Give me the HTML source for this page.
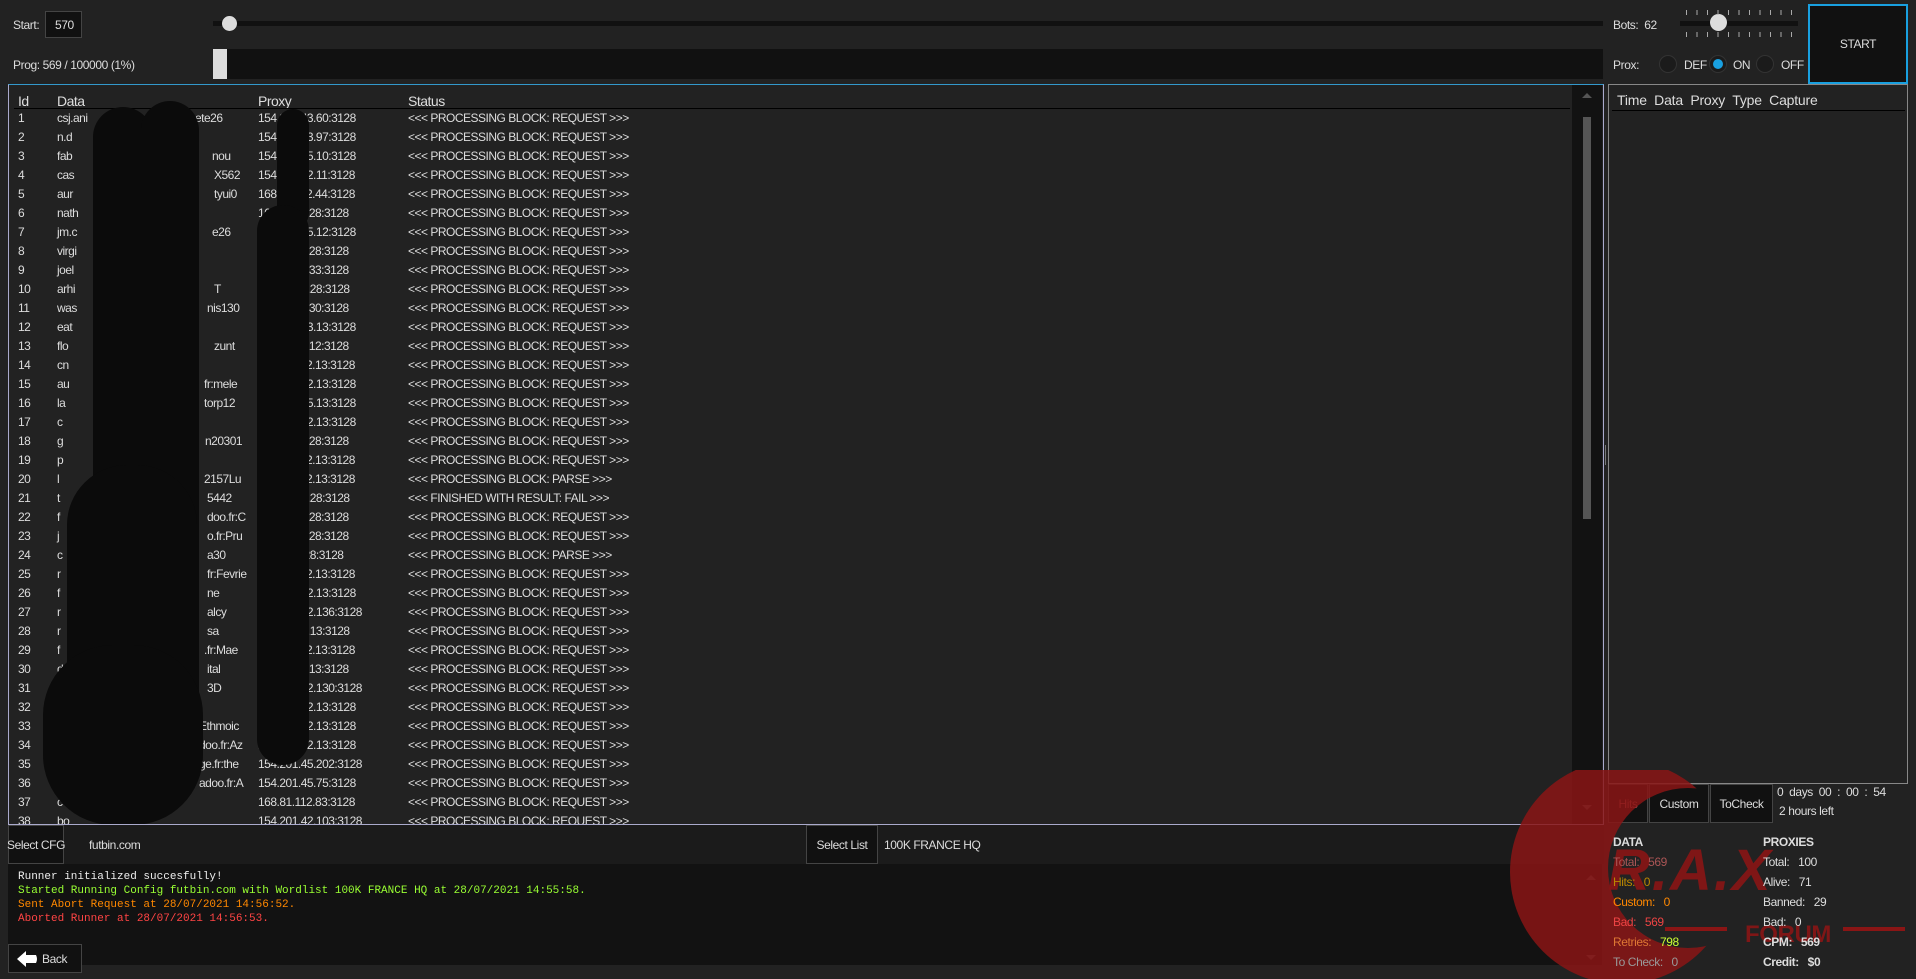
<!DOCTYPE html>
<html><head><meta charset="utf-8"><style>
*{box-sizing:border-box;margin:0;padding:0}
body{width:1916px;height:979px;background:#222;overflow:hidden;position:relative;font-family:"Liberation Sans",sans-serif;color:#ddd;font-size:12px;letter-spacing:-0.4px}
.a{position:absolute;white-space:nowrap}
.lbl{font-size:12px;color:#ddd}
.tbl{left:8px;top:84px;width:1596px;height:741px;border:1px solid #aac;border-top-color:#39c;background:#222;overflow:hidden}
.row{position:absolute;left:0;height:19px;width:1560px;font-size:12px;color:#ddd;white-space:nowrap;letter-spacing:-0.5px}
.row span{position:absolute;top:2px}
.c1{left:9px}.c2{left:48px}.c3{left:249px}.c4{left:399px}
.btn{background:#111;border:1px solid #444;color:#ddd;display:flex;align-items:center;justify-content:center;font-size:12px;white-space:nowrap}
.mono{font-family:"Liberation Mono",monospace;font-size:11px;letter-spacing:0}
.blob{position:absolute;background:#0b0b0b}
</style></head><body>
<div class="a lbl" style="left:13px;top:18px">Start:</div>
<div class="a" style="left:45px;top:11px;width:37px;height:27px;background:#111;border:1px solid #444;font-size:12px;padding:6px 0 0 9px">570</div>
<div class="a" style="left:213px;top:21px;width:1390px;height:5px;background:#111"></div>
<div class="a" style="left:222px;top:16px;width:15px;height:15px;border-radius:50%;background:#ddd"></div>
<div class="a lbl" style="left:13px;top:58px">Prog: 569 / 100000 (1%)</div>
<div class="a" style="left:213px;top:49px;width:1390px;height:30px;background:#111"></div>
<div class="a" style="left:213px;top:49px;width:14px;height:30px;background:#ddd"></div>
<div class="a lbl" style="left:1613px;top:18px">Bots:&nbsp;&nbsp;62</div>
<div class="a" style="left:1680px;top:21px;width:118px;height:5px;background:#111"></div>
<div class="a" style="left:1710px;top:14px;width:17px;height:17px;border-radius:50%;background:#ddd"></div>
<div class="a" style="left:1686px;top:10px;width:112px;height:5px;background:repeating-linear-gradient(90deg,#aaa 0 1px,transparent 1px 10.5px)"></div>
<div class="a" style="left:1686px;top:32px;width:112px;height:5px;background:repeating-linear-gradient(90deg,#aaa 0 1px,transparent 1px 10.5px)"></div>
<div class="a lbl" style="left:1613px;top:58px">Prox:</div>
<div class="a" style="left:1659px;top:55px;width:18px;height:18px;border-radius:50%;border:1px solid #333;background:#1b1b1b"></div>
<div class="a lbl" style="left:1684px;top:58px">DEF</div>
<div class="a" style="left:1709px;top:55px;width:18px;height:18px;border-radius:50%;border:1px solid #333;background:#1b1b1b"><div style="margin:3px;width:10px;height:10px;border-radius:50%;background:#19a0e0"></div></div>
<div class="a lbl" style="left:1733px;top:58px">ON</div>
<div class="a" style="left:1756px;top:55px;width:18px;height:18px;border-radius:50%;border:1px solid #333;background:#1b1b1b"></div>
<div class="a lbl" style="left:1781px;top:58px">OFF</div>
<div class="a" style="left:1808px;top:4px;width:100px;height:80px;background:#111;border:2px solid #19a0e0;display:flex;align-items:center;justify-content:center;font-size:12px">START</div>

<div class="a tbl">
<div class="row" style="top:6px;font-size:14px"><span class="c1">Id</span><span class="c2">Data</span><span class="c3">Proxy</span><span class="c4">Status</span></div>
<div class="a" style="left:5px;top:23px;width:1556px;height:1px;background:#000"></div>
<div class="row" style="top:24px"><span class="c1">1</span><span class="c2">csj.ani</span><span style="left:186px">ete26</span><span class="c3">154.201.43.60:3128</span><span class="c4">&lt;&lt;&lt; PROCESSING BLOCK: REQUEST &gt;&gt;&gt;</span></div>
<div class="row" style="top:43px"><span class="c1">2</span><span class="c2">n.d</span><span class="c3">154.201.43.97:3128</span><span class="c4">&lt;&lt;&lt; PROCESSING BLOCK: REQUEST &gt;&gt;&gt;</span></div>
<div class="row" style="top:62px"><span class="c1">3</span><span class="c2">fab</span><span style="left:203px">nou</span><span class="c3">154.201.45.10:3128</span><span class="c4">&lt;&lt;&lt; PROCESSING BLOCK: REQUEST &gt;&gt;&gt;</span></div>
<div class="row" style="top:81px"><span class="c1">4</span><span class="c2">cas</span><span style="left:205px">X562</span><span class="c3">154.201.42.11:3128</span><span class="c4">&lt;&lt;&lt; PROCESSING BLOCK: REQUEST &gt;&gt;&gt;</span></div>
<div class="row" style="top:100px"><span class="c1">5</span><span class="c2">aur</span><span style="left:205px">tyui0</span><span class="c3">168.81.112.44:3128</span><span class="c4">&lt;&lt;&lt; PROCESSING BLOCK: REQUEST &gt;&gt;&gt;</span></div>
<div class="row" style="top:119px"><span class="c1">6</span><span class="c2">nath</span><span class="c3">168.81.11.28:3128</span><span class="c4">&lt;&lt;&lt; PROCESSING BLOCK: REQUEST &gt;&gt;&gt;</span></div>
<div class="row" style="top:138px"><span class="c1">7</span><span class="c2">jm.c</span><span style="left:203px">e26</span><span class="c3">154.201.45.12:3128</span><span class="c4">&lt;&lt;&lt; PROCESSING BLOCK: REQUEST &gt;&gt;&gt;</span></div>
<div class="row" style="top:157px"><span class="c1">8</span><span class="c2">virgi</span><span class="c3">168.81.11.28:3128</span><span class="c4">&lt;&lt;&lt; PROCESSING BLOCK: REQUEST &gt;&gt;&gt;</span></div>
<div class="row" style="top:176px"><span class="c1">9</span><span class="c2">joel</span><span class="c3">196.11.22.33:3128</span><span class="c4">&lt;&lt;&lt; PROCESSING BLOCK: REQUEST &gt;&gt;&gt;</span></div>
<div class="row" style="top:195px"><span class="c1">10</span><span class="c2">arhi</span><span style="left:205px">T</span><span class="c3">154.201.4.28:3128</span><span class="c4">&lt;&lt;&lt; PROCESSING BLOCK: REQUEST &gt;&gt;&gt;</span></div>
<div class="row" style="top:214px"><span class="c1">11</span><span class="c2">was</span><span style="left:198px">nis130</span><span class="c3">168.81.11.30:3128</span><span class="c4">&lt;&lt;&lt; PROCESSING BLOCK: REQUEST &gt;&gt;&gt;</span></div>
<div class="row" style="top:233px"><span class="c1">12</span><span class="c2">eat</span><span class="c3">154.201.43.13:3128</span><span class="c4">&lt;&lt;&lt; PROCESSING BLOCK: REQUEST &gt;&gt;&gt;</span></div>
<div class="row" style="top:252px"><span class="c1">13</span><span class="c2">flo</span><span style="left:205px">zunt</span><span class="c3">196.11.22.12:3128</span><span class="c4">&lt;&lt;&lt; PROCESSING BLOCK: REQUEST &gt;&gt;&gt;</span></div>
<div class="row" style="top:271px"><span class="c1">14</span><span class="c2">cn</span><span class="c3">168.81.112.13:3128</span><span class="c4">&lt;&lt;&lt; PROCESSING BLOCK: REQUEST &gt;&gt;&gt;</span></div>
<div class="row" style="top:290px"><span class="c1">15</span><span class="c2">au</span><span style="left:195px">fr:mele</span><span class="c3">154.201.42.13:3128</span><span class="c4">&lt;&lt;&lt; PROCESSING BLOCK: REQUEST &gt;&gt;&gt;</span></div>
<div class="row" style="top:309px"><span class="c1">16</span><span class="c2">la</span><span style="left:195px">torp12</span><span class="c3">154.201.45.13:3128</span><span class="c4">&lt;&lt;&lt; PROCESSING BLOCK: REQUEST &gt;&gt;&gt;</span></div>
<div class="row" style="top:328px"><span class="c1">17</span><span class="c2">c</span><span class="c3">154.201.42.13:3128</span><span class="c4">&lt;&lt;&lt; PROCESSING BLOCK: REQUEST &gt;&gt;&gt;</span></div>
<div class="row" style="top:347px"><span class="c1">18</span><span class="c2">g</span><span style="left:196px">n20301</span><span class="c3">168.81.11.28:3128</span><span class="c4">&lt;&lt;&lt; PROCESSING BLOCK: REQUEST &gt;&gt;&gt;</span></div>
<div class="row" style="top:366px"><span class="c1">19</span><span class="c2">p</span><span class="c3">168.81.112.13:3128</span><span class="c4">&lt;&lt;&lt; PROCESSING BLOCK: REQUEST &gt;&gt;&gt;</span></div>
<div class="row" style="top:385px"><span class="c1">20</span><span class="c2">l</span><span style="left:195px">2157Lu</span><span class="c3">168.81.112.13:3128</span><span class="c4">&lt;&lt;&lt; PROCESSING BLOCK: PARSE &gt;&gt;&gt;</span></div>
<div class="row" style="top:404px"><span class="c1">21</span><span class="c2">t</span><span style="left:198px">5442</span><span class="c3">154.201.4.28:3128</span><span class="c4">&lt;&lt;&lt; FINISHED WITH RESULT: FAIL &gt;&gt;&gt;</span></div>
<div class="row" style="top:423px"><span class="c1">22</span><span class="c2">f</span><span style="left:198px">doo.fr:C</span><span class="c3">168.81.11.28:3128</span><span class="c4">&lt;&lt;&lt; PROCESSING BLOCK: REQUEST &gt;&gt;&gt;</span></div>
<div class="row" style="top:442px"><span class="c1">23</span><span class="c2">j</span><span style="left:198px">o.fr:Pru</span><span class="c3">196.11.22.28:3128</span><span class="c4">&lt;&lt;&lt; PROCESSING BLOCK: REQUEST &gt;&gt;&gt;</span></div>
<div class="row" style="top:461px"><span class="c1">24</span><span class="c2">c</span><span style="left:198px">a30</span><span class="c3">168.81.1.28:3128</span><span class="c4">&lt;&lt;&lt; PROCESSING BLOCK: PARSE &gt;&gt;&gt;</span></div>
<div class="row" style="top:480px"><span class="c1">25</span><span class="c2">r</span><span style="left:198px">fr:Fevrie</span><span class="c3">168.81.112.13:3128</span><span class="c4">&lt;&lt;&lt; PROCESSING BLOCK: REQUEST &gt;&gt;&gt;</span></div>
<div class="row" style="top:499px"><span class="c1">26</span><span class="c2">f</span><span style="left:198px">ne</span><span class="c3">154.201.42.13:3128</span><span class="c4">&lt;&lt;&lt; PROCESSING BLOCK: REQUEST &gt;&gt;&gt;</span></div>
<div class="row" style="top:518px"><span class="c1">27</span><span class="c2">r</span><span style="left:198px">alcy</span><span class="c3">154.201.42.136:3128</span><span class="c4">&lt;&lt;&lt; PROCESSING BLOCK: REQUEST &gt;&gt;&gt;</span></div>
<div class="row" style="top:537px"><span class="c1">28</span><span class="c2">r</span><span style="left:198px">sa</span><span class="c3">154.201.4.13:3128</span><span class="c4">&lt;&lt;&lt; PROCESSING BLOCK: REQUEST &gt;&gt;&gt;</span></div>
<div class="row" style="top:556px"><span class="c1">29</span><span class="c2">f</span><span style="left:195px">.fr:Mae</span><span class="c3">168.81.112.13:3128</span><span class="c4">&lt;&lt;&lt; PROCESSING BLOCK: REQUEST &gt;&gt;&gt;</span></div>
<div class="row" style="top:575px"><span class="c1">30</span><span class="c2">d</span><span style="left:198px">ital</span><span class="c3">196.11.22.13:3128</span><span class="c4">&lt;&lt;&lt; PROCESSING BLOCK: REQUEST &gt;&gt;&gt;</span></div>
<div class="row" style="top:594px"><span class="c1">31</span><span class="c2">d</span><span style="left:198px">3D</span><span class="c3">154.201.42.130:3128</span><span class="c4">&lt;&lt;&lt; PROCESSING BLOCK: REQUEST &gt;&gt;&gt;</span></div>
<div class="row" style="top:613px"><span class="c1">32</span><span class="c2">g</span><span class="c3">154.201.42.13:3128</span><span class="c4">&lt;&lt;&lt; PROCESSING BLOCK: REQUEST &gt;&gt;&gt;</span></div>
<div class="row" style="top:632px"><span class="c1">33</span><span class="c2">e</span><span style="left:190px">Ethmoic</span><span class="c3">154.201.42.13:3128</span><span class="c4">&lt;&lt;&lt; PROCESSING BLOCK: REQUEST &gt;&gt;&gt;</span></div>
<div class="row" style="top:651px"><span class="c1">34</span><span class="c2">c</span><span style="left:190px">doo.fr:Az</span><span class="c3">154.201.42.13:3128</span><span class="c4">&lt;&lt;&lt; PROCESSING BLOCK: REQUEST &gt;&gt;&gt;</span></div>
<div class="row" style="top:670px"><span class="c1">35</span><span class="c2">t</span><span style="left:190px">ge.fr:the</span><span class="c3">154.201.45.202:3128</span><span class="c4">&lt;&lt;&lt; PROCESSING BLOCK: REQUEST &gt;&gt;&gt;</span></div>
<div class="row" style="top:689px"><span class="c1">36</span><span class="c2">c</span><span style="left:190px">adoo.fr:A</span><span class="c3">154.201.45.75:3128</span><span class="c4">&lt;&lt;&lt; PROCESSING BLOCK: REQUEST &gt;&gt;&gt;</span></div>
<div class="row" style="top:708px"><span class="c1">37</span><span class="c2">c</span><span class="c3">168.81.112.83:3128</span><span class="c4">&lt;&lt;&lt; PROCESSING BLOCK: REQUEST &gt;&gt;&gt;</span></div>
<div class="row" style="top:727px"><span class="c1">38</span><span class="c2">bo</span><span class="c3">154.201.42.103:3128</span><span class="c4">&lt;&lt;&lt; PROCESSING BLOCK: REQUEST &gt;&gt;&gt;</span></div>
<!-- scribbles -->
<div class="blob" style="left:84px;top:22px;width:60px;height:690px;border-radius:30px"></div>
<div class="blob" style="left:132px;top:16px;width:58px;height:700px;border-radius:30px"></div>
<div class="blob" style="left:58px;top:380px;width:130px;height:330px;border-radius:60px"></div>
<div class="blob" style="left:34px;top:560px;width:160px;height:180px;border-radius:70px"></div>
<div class="blob" style="left:268px;top:24px;width:32px;height:120px;border-radius:16px"></div>
<div class="blob" style="left:248px;top:120px;width:52px;height:560px;border-radius:26px"></div>
<!-- scrollbar -->
<div class="a" style="left:1563px;top:0;width:30px;height:739px;background:#121212"></div>
<div class="a" style="left:1573px;top:8px;width:0;height:0;border-left:5px solid transparent;border-right:5px solid transparent;border-bottom:5px solid #555"></div>
<div class="a" style="left:1574px;top:32px;width:8px;height:402px;background:#555"></div>
<div class="a" style="left:1573px;top:720px;width:0;height:0;border-left:5px solid transparent;border-right:5px solid transparent;border-top:5px solid #555"></div>
</div>
<div class="a" style="left:1605px;top:445px;width:1px;height:20px;background:#777"></div>

<div class="a" style="left:1608px;top:84px;width:300px;height:700px;border:1px solid #888"></div>
<div class="a" style="left:1617px;top:92px;font-size:14px;letter-spacing:-0.2px">Time&nbsp; Data&nbsp; Proxy&nbsp; Type&nbsp; Capture</div>
<div class="a" style="left:1612px;top:110px;width:293px;height:1px;background:#000"></div>
<div class="a btn" style="left:1608px;top:784px;width:40px;height:39px;color:#b55">Hits</div>
<div class="a btn" style="left:1649px;top:784px;width:60px;height:39px">Custom</div>
<div class="a btn" style="left:1710px;top:784px;width:63px;height:39px">ToCheck</div>
<div class="a" style="left:1777px;top:785px;font-size:12px">0&nbsp; days&nbsp; 00&nbsp; :&nbsp; 00&nbsp; :&nbsp; 54</div>
<div class="a" style="left:1779px;top:804px;font-size:12px">2 hours left</div>

<div class="a" style="left:8px;top:825px;width:1596px;height:39px;background:#1b1b1b"></div>
<div class="a btn" style="left:8px;top:825px;width:56px;height:39px">Select CFG</div>
<div class="a" style="left:89px;top:838px;font-size:12px">futbin.com</div>
<div class="a btn" style="left:806px;top:825px;width:72px;height:39px">Select List</div>
<div class="a" style="left:884px;top:838px;font-size:12px">100K FRANCE HQ</div>
<div class="a" style="left:8px;top:864px;width:1594px;height:101px;background:#121212"></div>
<div class="a mono" style="left:18px;top:870px;line-height:14px">
<div style="color:#eee">Runner initialized succesfully!</div>
<div style="color:#9f3">Started Running Config futbin.com with Wordlist 100K FRANCE HQ at 28/07/2021 14:55:58.</div>
<div style="color:#f80">Sent Abort Request at 28/07/2021 14:56:52.</div>
<div style="color:#f44">Aborted Runner at 28/07/2021 14:56:53.</div>
</div>
<div class="a" style="left:1586px;top:875px;border-left:5px solid transparent;border-right:5px solid transparent;border-bottom:5px solid #555"></div>
<div class="a" style="left:1586px;top:955px;border-left:5px solid transparent;border-right:5px solid transparent;border-top:5px solid #555"></div>
<div class="a btn" style="left:8px;top:944px;width:74px;height:29px;justify-content:flex-start;padding-left:7px">
<svg width="22" height="18" viewBox="0 0 22 18"><path d="M1 9 L10 1 L10 5 L20 5 Q22 9 20 13 L10 13 L10 17 Z" fill="#fff"/></svg><span style="margin-left:4px">Back</span></div>

<svg class="a" style="left:1500px;top:770px" width="416" height="209" viewBox="1500 770 416 209">
<defs><mask id="m"><rect x="1500" y="770" width="416" height="209" fill="#fff"/><circle cx="1688" cy="868" r="80" fill="#000"/></mask></defs>
<circle cx="1622" cy="872" r="112" fill="#8a1515" fill-opacity="0.85" mask="url(#m)"/>
<text x="1608" y="890" font-family="Liberation Sans" font-weight="bold" font-style="italic" font-size="58" fill="#8a1515" fill-opacity="0.9" letter-spacing="2">R.A.X</text>
<rect x="1665" y="927" width="62" height="4" fill="#8a1515"/>
<rect x="1843" y="927" width="62" height="4" fill="#8a1515"/>
<text x="1745" y="942" font-family="Liberation Sans" font-weight="bold" font-size="24" fill="#8a1515" fill-opacity="0.9">FORUM</text>
</svg>

<div class="a" style="left:1613px;top:832px;font-size:12px;line-height:20px">
<div style="color:#ddd;font-weight:bold">DATA</div>
<div style="color:#a55">Total:&nbsp;&nbsp; 569</div>
<div style="color:#b80">Hits:&nbsp;&nbsp; 0</div>
<div style="color:#f80">Custom:&nbsp;&nbsp; 0</div>
<div style="color:#e44">Bad:&nbsp;&nbsp; 569</div>
<div style="color:#d73">Retries:&nbsp;&nbsp; <span style="color:#cf3">798</span></div>
<div style="color:#999">To Check:&nbsp;&nbsp; 0</div>
</div>
<div class="a" style="left:1763px;top:832px;font-size:12px;line-height:20px;color:#ddd">
<div style="font-weight:bold">PROXIES</div>
<div>Total:&nbsp;&nbsp; 100</div>
<div>Alive:&nbsp;&nbsp; 71</div>
<div>Banned:&nbsp;&nbsp; 29</div>
<div>Bad:&nbsp;&nbsp; 0</div>
<div style="font-weight:bold">CPM:&nbsp;&nbsp; 569</div>
<div style="font-weight:bold">Credit:&nbsp;&nbsp; $0</div>
</div>
</body></html>
